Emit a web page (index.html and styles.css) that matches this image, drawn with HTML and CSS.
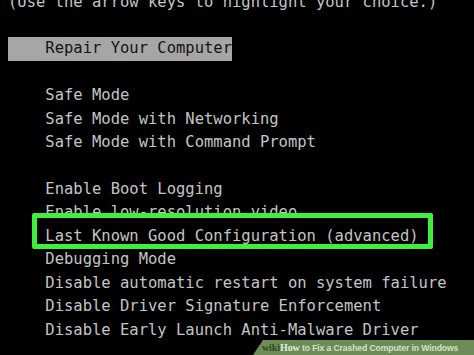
FILE: index.html
```html
<!DOCTYPE html>
<html lang="en">
<head>
  <meta charset="UTF-8" />
  <meta name="viewport" content="width=device-width, initial-scale=1.0"/>
  <title>Advanced Boot Options</title>
  <link rel="stylesheet" href="styles.css">
</head>
<body>
  <div class="screen">
    <div class="line">(Use the arrow keys to highlight your choice.)</div>
    <div class="line"> </div>
    <div class="line"><span class="selected">    Repair Your Computer</span></div>
    <div class="line"> </div>
    <div class="line">    Safe Mode</div>
    <div class="line">    Safe Mode with Networking</div>
    <div class="line">    Safe Mode with Command Prompt</div>
    <div class="line"> </div>
    <div class="line">    Enable Boot Logging</div>
    <div class="line">    Enable low-resolution video</div>
    <div class="line boxed"><span>    Last Known Good Configuration (advanced)</span></div>
    <div class="line">    Debugging Mode</div>
    <div class="line">    Disable automatic restart on system failure</div>
    <div class="line">    Disable Driver Signature Enforcement</div>
    <div class="line">    Disable Early Launch Anti-Malware Driver</div>
  </div>

  <!-- watermark strip -->
  <div class="watermark"><span class="wiki">wiki</span><span class="how">How</span> to Fix a Crashed Computer in Windows</div>
</body>
</html>
```

FILE: styles.css
```css
html, body {
  margin: 0;
  background: #000;
}
body {
  width: 474px;
  height: 355px;
  overflow: hidden;
  position: relative;
}
.screen {
  margin-top: -9.5px;
  padding-left: 8px;
  font-family: "DejaVu Sans Mono", monospace;
  font-size: 15.5px;
  line-height: 23.45px;
  color: #c4c4c4;
}
.line {
  height: 23.45px;
  white-space: pre;
}
.selected {
  display: inline-block;
  background: #a6a6a6;
  color: #141414;
}
.boxed {
  position: relative;
}
.boxed::before {
  content: "";
  position: absolute;
  left: 24px;
  top: -12px;
  width: 391px;
  height: 26px;
  border: 5px solid #3ef03a;
  border-radius: 2px;
  background: #000;
}
.boxed span {
  position: relative;
}
.watermark {
  position: absolute;
  right: 0;
  bottom: 0;
  width: 221px;
  height: 15px;
  padding-left: 9px;
  box-sizing: border-box;
  background: #6d8c57;
  clip-path: polygon(10px 0, 100% 0, 100% 100%, 0 100%);
  font-family: "Liberation Sans", Arial, sans-serif;
  font-weight: bold;
  font-size: 8.6px;
  line-height: 15px;
  color: #d6e0cc;
  white-space: nowrap;
  letter-spacing: -0.1px;
}
.wiki {
  font-family: "Liberation Serif", serif;
  font-size: 10px;
  color: #2f4a22;
}
.how {
  font-family: "Liberation Serif", serif;
  font-size: 10px;
  color: #e2eadb;
}
```
